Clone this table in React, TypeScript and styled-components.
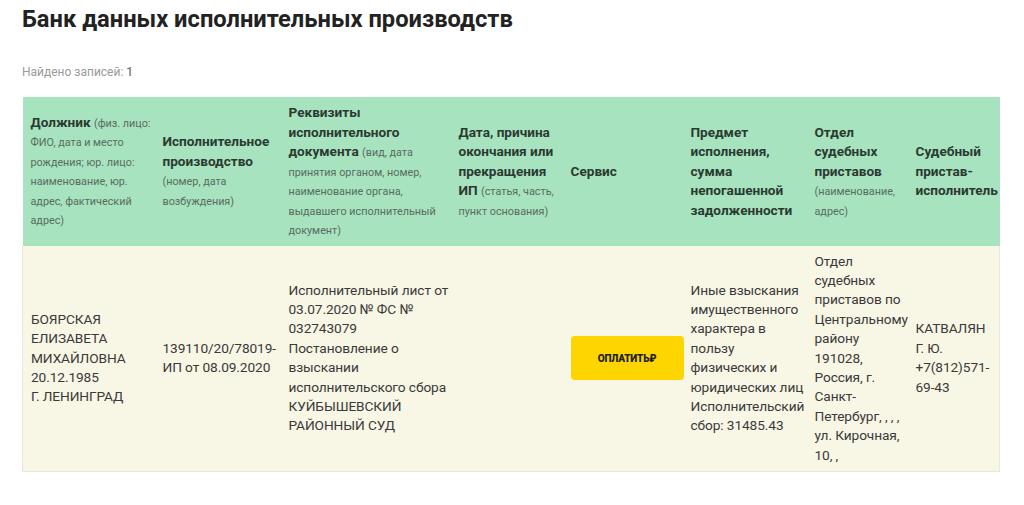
import React from 'react';
import styled, { createGlobalStyle } from 'styled-components';

const GlobalStyle = createGlobalStyle`
    body {
        margin: 0;
        background: #fff;
        font-family: Roboto, "Liberation Sans", sans-serif;
        color: #333;
    }
`

const Page = styled.div`
    padding: 0 22px;
    width: 977px;
`

const Title = styled.h1`
    margin: 5px 0 0;
    font-size: 23.7px;
    line-height: 29px;
    font-weight: 700;
    color: #222;
`

const Counter = styled.div`
    margin-top: 30px;
    font-size: 12px;
    line-height: 17px;
    color: #9a9a9a;

    b {
        font-weight: 500;
        color: #777;
    }
`

const Table = styled.table`
    margin-top: 16px;
    width: 977px;
    table-layout: fixed;
    border-collapse: collapse;
    font-size: 13.7px;
    line-height: 19.4px;
    letter-spacing: -0.1px;
`

const HeadRow = styled.tr`
    background: #a7e3bf;
`

const BodyRow = styled.tr`
    background: #f8f6e5;
    border: 1px solid #e8e7da;
    border-top: none;
`

const Th = styled.th`
    padding: 6px 0 6px 8px;
    text-align: left;
    vertical-align: middle;
    font-weight: 700;
    font-size: 13.6px;
    line-height: 19.5px;
    letter-spacing: 0;
    color: #2b3a31;
`

const Hint = styled.span`
    font-weight: 400;
    font-size: 10.8px;
    line-height: 12px;
    color: #5a6b60;
`

const Td = styled.td`
    padding: 6px 0 6px 8px;
    vertical-align: middle;
    color: #3a3a3a;
`

const PayButton = styled.button`
    width: 113px;
    height: 44px;
    border: none;
    border-radius: 4px;
    background: #ffd500;
    color: #222;
    font-family: Roboto, "Liberation Sans", sans-serif;
    font-size: 10px;
    font-weight: 900;
    letter-spacing: -0.2px;
    cursor: pointer;
`

const widths = [132, 126, 170, 112, 120, 124, 101, 92];

export default function App() {
    return (
        <Page>
            <GlobalStyle />
            <Title>Банк данных исполнительных производств</Title>
            <Counter>Найдено записей: <b>1</b></Counter>
            <Table>
                <colgroup>
                    {widths.map((w, i) => <col key={i} style={{ width: w }} />)}
                </colgroup>
                <thead>
                    <HeadRow>
                        <Th>Должник <Hint>(физ. лицо: ФИО, дата и место рождения; юр. лицо: наименование, юр. адрес, фактический адрес)</Hint></Th>
                        <Th>Исполнительное производство <Hint>(номер, дата возбуждения)</Hint></Th>
                        <Th>Реквизиты исполнительного документа <Hint>(вид, дата принятия органом, номер, наименование органа, выдавшего исполнительный документ)</Hint></Th>
                        <Th>Дата, причина окончания или прекращения ИП <Hint>(статья, часть, пункт основания)</Hint></Th>
                        <Th>Сервис</Th>
                        <Th>Предмет исполнения, сумма непогашенной задолженности</Th>
                        <Th>Отдел судебных приставов <Hint>(наименование, адрес)</Hint></Th>
                        <Th>Судебный пристав-исполнитель</Th>
                    </HeadRow>
                </thead>
                <tbody>
                    <BodyRow>
                        <Td>БОЯРСКАЯ ЕЛИЗАВЕТА МИХАЙЛОВНА<br />20.12.1985<br />Г. ЛЕНИНГРАД</Td>
                        <Td>139110/20/78019-ИП от 08.09.2020</Td>
                        <Td>Исполнительный лист от 03.07.2020 № ФС № 032743079<br />Постановление о взыскании исполнительского сбора<br />КУЙБЫШЕВСКИЙ РАЙОННЫЙ СУД</Td>
                        <Td></Td>
                        <Td><PayButton>ОПЛАТИТЬ₽</PayButton></Td>
                        <Td>Иные взыскания имущественного характера в пользу физических и юридических лиц<br />Исполнительский сбор: 31485.43</Td>
                        <Td>Отдел судебных приставов по Центральному району<br />191028, Россия, г. Санкт-Петербург, , , , ул. Кирочная, 10, ,</Td>
                        <Td>КАТВАЛЯН<br />Г. Ю.<br />+7(812)571-69-43</Td>
                    </BodyRow>
                </tbody>
            </Table>
        </Page>
    );
}
